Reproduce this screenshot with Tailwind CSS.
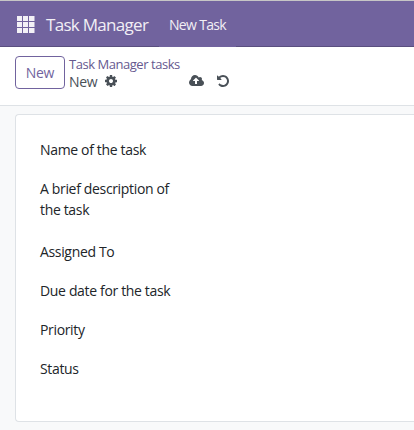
<!DOCTYPE html>
<html lang="en">
<head>
<meta charset="utf-8">
<title>Task Manager</title>
<script src="https://cdn.jsdelivr.net/npm/@tailwindcss/browser@4"></script>
</head>
<body class="w-[414px] h-[430px] overflow-hidden flex flex-col bg-[#f8f9fa] font-['Open_Sans','Noto_Sans',sans-serif] text-[14px] leading-[21px] text-[#212529]">
<header class="h-[47px] shrink-0 flex items-stretch bg-[#71639e] border-t border-t-[#c6c6c6] text-[#f1eff5]">
  <div class="w-[159px] flex items-center border-b border-[#5a4f7f] pl-[17px]">
    <svg class="w-[18px] h-[17px] mt-px shrink-0" viewBox="0 0 18 17" fill="#f3f1f6"><path d="M0 0h5v5H0zM6 0h5v5H6zM12 0h5.5v5H12zM0 6h5v5H0zM6 6h5v5H6zM12 6h5.5v5H12zM0 12h5v5H0zM6 12h5v5H6zM12 12h5.5v5H12z"/></svg>
    <span class="ml-[11px] mt-[2px] text-[17px] tracking-[-0.7px] whitespace-nowrap">Task Manager</span>
  </div>
  <nav class="w-[77px] flex items-center pl-[10px] pt-px whitespace-nowrap tracking-[-0.68px]">New Task</nav>
  <div class="flex-1 border-b border-[#5a4f7f]"></div>
</header>
<section class="h-[59px] shrink-0 flex bg-white border-b border-[#dee2e6] pl-[15px] pt-[9px]">
  <button class="w-[50px] h-[33px] rounded-[4px] border border-[#71639e] text-[#71639e] tracking-[-0.3px]">New</button>
  <div class="ml-[4px] text-[#495057]">
    <div class="h-[17px] leading-[17px] text-[13px] tracking-[-0.46px] text-[#66598f] whitespace-nowrap">Task Manager tasks</div>
    <div class="h-[17px] leading-[17px] flex items-center">
      <span class="w-[36px] -mt-px tracking-[-0.3px]">New</span>
      <svg class="w-[12px] h-[12px] -mt-px" viewBox="128 128 1536 1536" fill="currentColor"><path d="M1152 896q0-106-75-181t-181-75-181 75-75 181 75 181 181 75 181-75 75-181zm512-109v222q0 12-8 23t-20 13l-185 28q-19 54-39 91 35 50 107 138 10 12 10 25t-9 23q-27 37-99 108t-94 71q-12 0-26-9l-138-108q-44 23-91 38-16 136-29 186-7 28-36 28h-222q-14 0-24.5-8.5t-11.5-21.5l-28-184q-49-16-90-37l-141 107q-10 9-25 9-14 0-25-11-126-114-165-168-7-10-7-23 0-12 8-23 15-21 51-66.5t54-70.5q-27-50-41-99l-183-27q-13-2-21-12.5t-8-23.5v-222q0-12 8-23t19-13l186-28q14-46 39-92-40-57-107-138-10-12-10-24 0-10 9-23 26-36 98.5-107.5t94.5-71.5q13 0 26 10l138 107q44-23 91-38 16-136 29-186 7-28 36-28h222q14 0 24.5 8.5t11.5 21.5l28 184q49 16 90 37l142-107q9-9 24-9 13 0 25 10 129 119 165 170 7 8 7 22 0 12-8 23-15 21-51 66.5t-54 70.5q26 50 41 98l183 28q13 2 21 12.5t8 23.5z"/></svg>
      <svg class="ml-[72px] w-[15px] h-[11px] -mt-[2px]" viewBox="-64 128 1920 1408" fill="currentColor"><path d="M1216 864q0-14-9-23l-352-352q-9-9-23-9t-23 9l-351 351q-10 12-10 24 0 14 9 23t23 9h224v352q0 13 9.5 22.5t22.5 9.5h192q13 0 22.5-9.5t9.5-22.5v-352h224q13 0 22.5-9.5t9.5-22.5zm640 288q0 159-112.5 271.5t-271.5 112.5h-1088q-185 0-316.5-131.5t-131.5-316.5q0-130 70-240t188-165q-2-30-2-43 0-212 150-362t362-150q156 0 285.5 87t188.5 231q71-62 166-62 106 0 181 75t75 181q0 76-41 138 130 31 213.5 135.5t83.5 238.5z"/></svg>
      <svg class="ml-[13px] w-[12px] h-[12px] -mt-px" viewBox="128 128 1536 1536" fill="currentColor"><path d="M1664 896q0 156-61 298t-164 245-245 164-298 61q-172 0-327-72.5t-264-204.5q-7-10-6.5-22.5t8.5-20.5l137-138q10-9 25-9 16 2 23 12 73 95 179 147t225 52q104 0 198.5-40.5t163.5-109.5 109.5-163.5 40.5-198.5-40.5-198.5-109.5-163.5-163.5-109.5-198.5-40.5q-98 0-188 35.5t-160 101.5l137 138q31 30 14 69-17 40-59 40h-448q-26 0-45-19t-19-45v-448q0-42 40-59 39-17 69 14l130 129q107-101 244.5-156.5t284.5-55.5q156 0 298 61t245 164 164 245 61 298z"/></svg>
    </div>
  </div>
</section>
<main class="ml-[15px] mt-[8px] h-[308px] shrink-0 bg-white border border-r-0 border-[#dee2e6] rounded-l-[4px] pl-[24px] pt-[24px] flex flex-col gap-[18px] tracking-[-0.34px] whitespace-nowrap">
  <div>Name of the task</div>
  <div class="mb-[3px]">A brief description of<br>the task</div>
  <div>Assigned To</div>
  <div>Due date for the task</div>
  <div>Priority</div>
  <div>Status</div>
</main>
</body>
</html>
